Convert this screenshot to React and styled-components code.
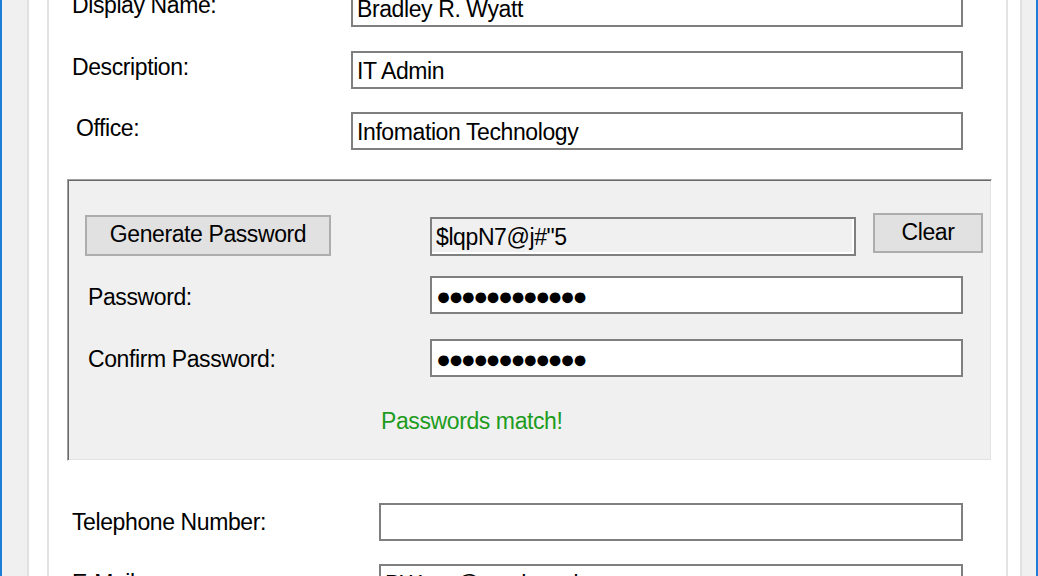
import React from "react";
import styled, { createGlobalStyle } from "styled-components";

const Global = createGlobalStyle`
  html, body { margin: 0; padding: 0; background: #ffffff; overflow: hidden; }
  body { font-family: "Liberation Sans", Arial, sans-serif; }
`;

const Window = styled.div`
  box-sizing: border-box;
  width: 1038px;
  height: 576px;
  display: flex;
  background: #f0f0f0;
  border-left: 2px solid #1c7ed6;
  border-right: 2px solid #1c7ed6;
  padding: 0 14px 0 25px;
  overflow: hidden;
`;

const TabPage = styled.div`
  flex: 1;
  display: flex;
  background: #ffffff;
  border-left: 2px solid #e1e1e1;
  border-right: 2px solid #e1e1e1;
  padding: 0 12px 0 18px;
`;

const Panel = styled.div`
  flex: 1;
  display: flex;
  flex-direction: column;
  background: #ffffff;
  border-left: 2px solid #e3e3e3;
  border-right: 2px solid #e3e3e3;
  overflow: hidden;
`;

const Form = styled.div`
  display: flex;
  flex-direction: column;
  margin-top: -11px;
  font-size: 23px;
  letter-spacing: -0.4px;
  line-height: 24px;
  color: #000;
`;

const Row = styled.div`
  display: flex;
  align-items: flex-start;
  padding-left: 23px;
  margin-top: ${(p) => p.$top || 0}px;
`;

const Label = styled.div`
  flex: 0 0 ${(p) => p.$w}px;
  box-sizing: border-box;
  padding-left: ${(p) => p.$indent || 0}px;
  margin-top: ${(p) => p.$mt ?? 4}px;
  white-space: nowrap;
`;

const TextBox = styled.div`
  box-sizing: border-box;
  width: ${(p) => p.$w}px;
  height: ${(p) => p.$h || 38}px;
  margin-top: ${(p) => p.$mt || 0}px;
  margin-left: ${(p) => p.$ml || 0}px;
  border: 2px solid #7f7f7f;
  background: ${(p) => (p.$readOnly ? "#f0f0f0" : "#ffffff")};
  box-shadow: ${(p) => (p.$readOnly ? "inset -2px -2px 0 #ffffff" : "none")};
  padding: 6px 4px 0;
  white-space: nowrap;
  overflow: hidden;
`;

const Dots = styled.span`
  font-size: 25px;
  letter-spacing: -2.7px;
  position: relative;
  top: 0px;
`;

const Group = styled.div`
  box-sizing: border-box;
  margin: 29px 14px 0 18px;
  border-top: 1px solid #a0a0a0;
  border-left: 1px solid #a0a0a0;
  border-bottom: 1px solid #ffffff;
  border-right: 1px solid #ffffff;
  box-shadow: inset 1px 1px 0 #696969, inset -1px -1px 0 #e3e3e3;
  background: #f0f0f0;
  padding: 33px 0 27px 17px;
  display: flex;
  flex-direction: column;
`;

const GroupRow = styled.div`
  display: flex;
  align-items: flex-start;
  margin-top: ${(p) => p.$top || 0}px;
`;

const Button = styled.div`
  box-sizing: border-box;
  width: ${(p) => p.$w}px;
  height: ${(p) => p.$h}px;
  margin-top: ${(p) => p.$mt || 0}px;
  margin-left: ${(p) => p.$ml || 0}px;
  background: #e1e1e1;
  border: 2px solid #adadad;
  padding-top: 5px;
  text-align: center;
  white-space: nowrap;
`;

const Status = styled.div`
  margin-top: 32px;
  padding-left: 296px;
  color: #1c9c1c;
`;

export default function App() {
  return (
    <>
      <Global />
      <Window>
        <TabPage>
          <Panel>
            <Form>
              <Row>
                <Label $w={279}>Display Name:</Label>
                <TextBox $w={612}>Bradley R. Wyatt</TextBox>
              </Row>
              <Row $top={24}>
                <Label $w={279}>Description:</Label>
                <TextBox $w={612}>IT Admin</TextBox>
              </Row>
              <Row $top={23}>
                <Label $w={279} $indent={4}>Office:</Label>
                <TextBox $w={612}>Infomation Technology</TextBox>
              </Row>

              <Group>
                <GroupRow>
                  <Button $w={246} $h={41} $mt={2}>Generate Password</Button>
                  <TextBox $w={426} $h={39} $mt={4} $ml={99} $readOnly>
                    $lqpN7@j#"5
                  </TextBox>
                  <Button $w={110} $h={40} $ml={17}>Clear</Button>
                </GroupRow>
                <GroupRow $top={20}>
                  <Label $w={345} $indent={3} $mt={9}>Password:</Label>
                  <TextBox $w={533}>
                    <Dots>●●●●●●●●●●●●</Dots>
                  </TextBox>
                </GroupRow>
                <GroupRow $top={25}>
                  <Label $w={345} $indent={3} $mt={8}>Confirm Password:</Label>
                  <TextBox $w={533}>
                    <Dots>●●●●●●●●●●●●</Dots>
                  </TextBox>
                </GroupRow>
                <Status>Passwords match!</Status>
              </Group>

              <Row $top={42}>
                <Label $w={307} $mt={7}>Telephone Number:</Label>
                <TextBox $w={584}></TextBox>
              </Row>
              <Row $top={23}>
                <Label $w={307} $mt={7}>E-Mail:</Label>
                <TextBox $w={584}>BWyatt@southernd.com</TextBox>
              </Row>
            </Form>
          </Panel>
        </TabPage>
      </Window>
    </>
  );
}
